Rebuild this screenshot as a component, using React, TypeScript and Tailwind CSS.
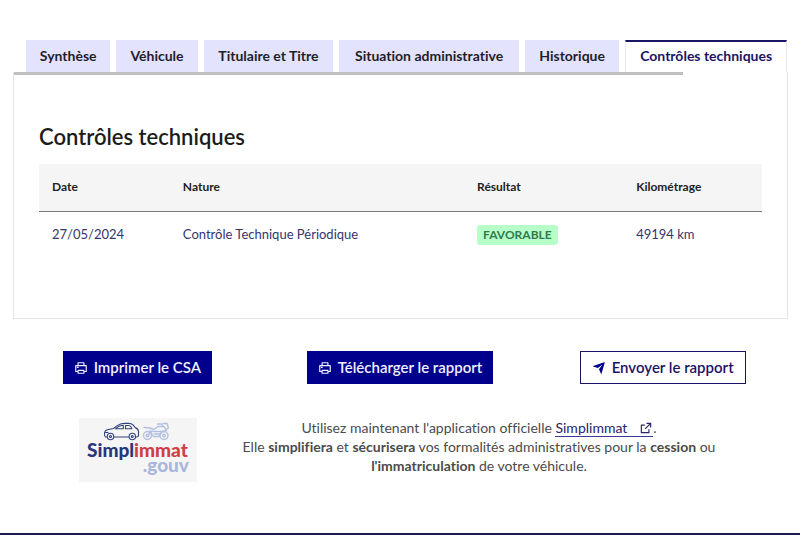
import React from "react";
import { RiPrinterLine, RiSendPlaneFill, RiExternalLinkLine } from "react-icons/ri";

const tabs = [
  "Synthèse",
  "Véhicule",
  "Titulaire et Titre",
  "Situation administrative",
  "Historique",
  "Contrôles techniques",
];

const columns = ["Date", "Nature", "Résultat", "Kilométrage"];

function Tabs() {
  return (
    <div
      role="tablist"
      aria-label="Rapport du véhicule"
      className="ml-[13px] grid grid-cols-[84fr_81fr_129fr_179fr_94fr_161fr] gap-[6px] pr-px"
    >
      {tabs.map((label) => {
        const active = label === "Contrôles techniques";
        return (
          <button
            key={label}
            type="button"
            role="tab"
            aria-selected={active}
            className={
              active
                ? "h-8 whitespace-nowrap border-x border-t-2 border-x-[#e8e8ec] border-t-[#1b1464] pb-[3px] text-sm font-bold text-[#1b1464]"
                : "h-8 whitespace-nowrap bg-[#e3e3fd] pb-px text-sm font-bold text-[#1e1e2a]"
            }
          >
            {label}
          </button>
        );
      })}
    </div>
  );
}

function ResultsTable() {
  return (
    <table className="w-full table-fixed border-collapse text-left text-[13px] leading-5">
      <colgroup>
        <col className="w-[18.1%]" />
        <col className="w-[40.7%]" />
        <col className="w-[22%]" />
        <col className="w-[19.2%]" />
      </colgroup>
      <thead>
        <tr className="h-[47px] border-b border-[#7b7b7b] bg-[#f5f5f5] text-xs text-[#222222]">
          {columns.map((c) => (
            <th key={c} scope="col" className="px-[13px] font-bold">
              {c}
            </th>
          ))}
        </tr>
      </thead>
      <tbody>
        <tr className="h-[46px] text-[#34346e]">
          <td className="px-[13px]">27/05/2024</td>
          <td className="px-[13px]">Contrôle Technique Périodique</td>
          <td className="px-[13px]">
            <span className="inline-block rounded-[3px] bg-[#b8fec9] px-[6px] text-xs leading-5 font-bold text-[#2f7a4b]">
              FAVORABLE
            </span>
          </td>
          <td className="px-[13px]">49194 km</td>
        </tr>
      </tbody>
    </table>
  );
}

function Logo() {
  return (
    <div className="h-16 w-[118px] shrink-0 bg-[#f5f5f5] pt-1 pr-2 pl-2 font-['Lato',sans-serif]">
      <svg viewBox="24 3 68 20" className="ml-4 h-5 w-[68px]" aria-hidden="true">
        <g fill="none" stroke="#33427f" strokeWidth="1.1" strokeLinecap="round" strokeLinejoin="round">
          <path d="M28 18h-1.500q-1-.5-1-3 0-3.500 3-4.200l6-1.300q4-3.500 7-4.500 2-.6 5-.6h3q3 0 4.500 1.500l2.500 3q3 .8 3 4v3.600q0 1.500-2 1.500h-1M35 18h14.500" />
          <path d="M36.500 9.800q3-3 6-3.300h1.800v3.300zM46.500 6.500h3q1.500 0 2.300 1.300l1 2h-6.300zM26.500 13.500h2.500" />
          <circle cx="31.500" cy="17.500" r="3.200" />
          <circle cx="53.300" cy="17.500" r="3.200" />
          <circle cx="31.500" cy="17.500" r="1" />
          <circle cx="53.300" cy="17.500" r="1" />
        </g>
        <g fill="none" stroke="#b4c0df" strokeWidth="1.400" strokeLinecap="round" strokeLinejoin="round">
          <circle cx="68.500" cy="16.500" r="4" />
          <circle cx="85" cy="16.500" r="4" />
          <circle cx="68.500" cy="16.500" r="1.300" />
          <circle cx="85" cy="16.500" r="1.300" />
          <path d="M65 8.500l6 .5 4 1.500 4-3h6l2.500 4-3.500 1M78.500 5h4l1.500 2.500M84 4.500h4l1.500 4.500-2.500 1.500M71 11.500l3.500 6h5.500l3.500-5.500M74 12.500h8M75.500 15h5M69 16l4-4" />
        </g>
      </svg>
      <div className="text-[19px] leading-4 font-black whitespace-nowrap text-[#29367a]">
        Simpl<span className="text-[#cf3f43]">immat</span>
      </div>
      <div className="text-right text-[19px] leading-[14px] font-black text-[#a9b7da]">.gouv</div>
    </div>
  );
}

const button = "flex h-[33px] items-center gap-[6px] whitespace-nowrap px-[11px] text-[15px] font-semibold";
const primary = `${button} bg-[#00008c] text-[#f0f0ff]`;

export default function App() {
  return (
    <div className="bg-white font-['Lato','Noto_Sans',sans-serif] [font-variant-ligatures:none]">
      <main className="border-b-2 border-[#1f1a4e] pb-[51px]">
        <section className="ml-[13px] mr-3 pt-10">
          <Tabs />
          <div role="tabpanel" className="border-x border-b border-[#e5e5e5] pb-[61px]">
            <div className="h-[3px] w-[86.5%] bg-[#c0c0c0]" />
            <div className="px-[25px] pt-[47px]">
              <h1 className="mb-3 text-[22px] leading-[30px] font-semibold text-[#1c1c1c]">Contrôles techniques</h1>
              <ResultsTable />
            </div>
          </div>
        </section>

        <div className="mt-8 grid grid-cols-3 justify-items-center px-[6px]">
          <button type="button" className={primary}>
            <RiPrinterLine className="size-[14px]" />
            Imprimer le CSA
          </button>
          <button type="button" className={primary}>
            <RiPrinterLine className="size-[14px]" />
            Télécharger le rapport
          </button>
          <button type="button" className={`${button} border border-[#1b1464] text-[#1b1464]`}>
            <RiSendPlaneFill className="size-[14px] text-[#00008c]" />
            Envoyer le rapport
          </button>
        </div>

        <div className="mx-[79px] mt-[34px] flex">
          <Logo />
          <p className="ml-10 text-center text-sm leading-[19px] text-[#4b4b4b]">
            Utilisez maintenant l'application officielle{" "}
            <a href="#simplimmat" className="inline-flex h-[18px] items-center gap-3 border-b border-[#3a3a9a] text-[#28236e]">
              Simplimmat
              <RiExternalLinkLine className="size-[14px]" />
            </a>
            .<br />
            Elle <strong>simplifiera</strong> et <strong>sécurisera</strong> vos formalités administratives pour la{" "}
            <strong>cession</strong> ou <strong>l'immatriculation</strong> de votre véhicule.
          </p>
        </div>
      </main>
    </div>
  );
}
